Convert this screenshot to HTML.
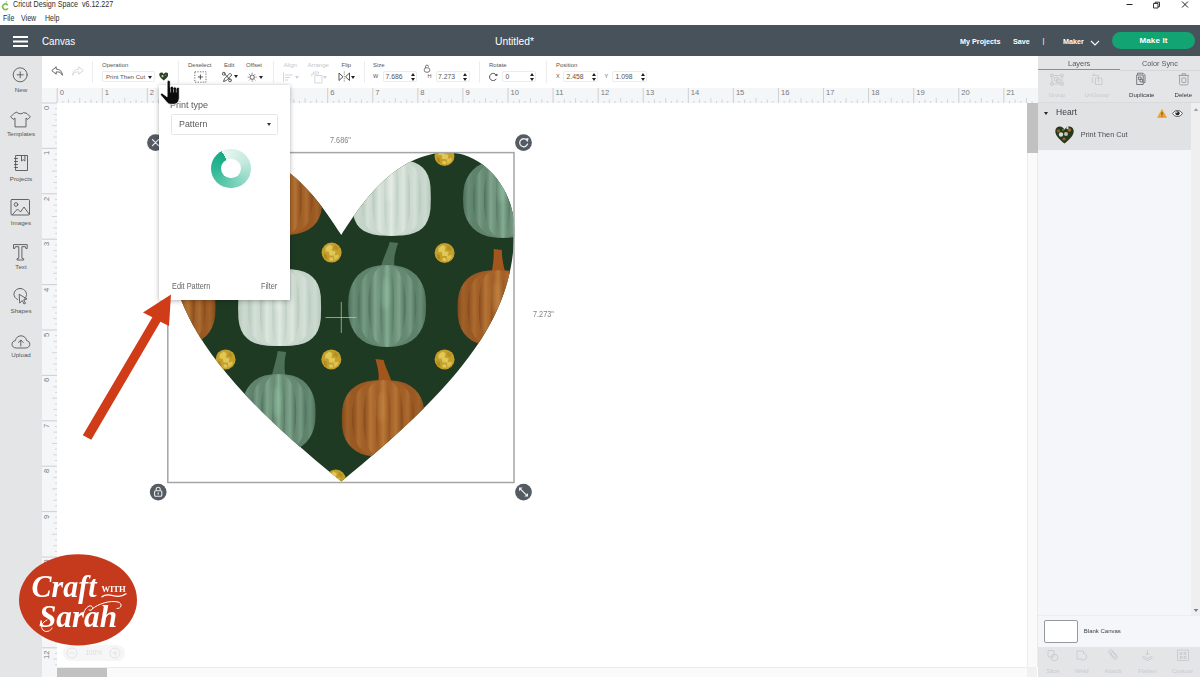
<!DOCTYPE html>
<html lang="en">
<head>
<meta charset="utf-8">
<title>Cricut Design Space</title>
<style>
*{box-sizing:border-box;margin:0;padding:0}
html,body{width:1200px;height:677px;overflow:hidden;background:#fff}
body{font-family:"Liberation Sans",sans-serif;color:#333;position:relative;font-size:8px}
.abs{position:absolute}
.t{position:absolute;white-space:nowrap;line-height:1;transform-origin:0 50%}
#titlebar{left:0;top:0;width:1200px;height:25px;background:#fff}
#header{left:0;top:25px;width:1200px;height:31px;background:#48525a}
#toolbar{left:42px;top:56px;width:996px;height:32px;background:#fff}
#leftbar{left:0;top:56px;width:42px;height:621px;background:#e4e5e7}
#rulerT{left:42px;top:88px;width:996px;height:15px;background:#f5f6f7}
#rulerL{left:42px;top:103px;width:15px;height:574px;background:#f5f6f7}
#canvas{left:57px;top:103px;width:970px;height:564px;background:#fff}
#vscroll{left:1027px;top:103px;width:11px;height:564px;background:#fafafa;border-left:1px solid #ececec;border-right:1px solid #ebebec}
#hscroll{left:57px;top:667px;width:970px;height:10px;background:#fafafa;border-top:1px solid #ededed}
#rightp{left:1038px;top:56px;width:162px;height:621px;background:#f4f6fa}

/* title */
#titlebar .t{color:#2e2e2e}
#header .t{color:#fff}
.lbl{position:absolute;white-space:nowrap;line-height:1;font-size:6px;color:#555;top:61.5px}
.dis{color:#c4c6c9}
.sep{position:absolute;top:61px;width:1px;height:22px;background:#ededef}
.inp{position:absolute;top:71px;height:11px;border:1px solid #ebecee;border-radius:2px;background:#fff}
.val{position:absolute;white-space:nowrap;line-height:1;font-size:6.8px;color:#555;top:73.7px}
.sm{position:absolute;white-space:nowrap;line-height:1;font-size:5.5px;color:#555;top:73.5px}
.car{position:absolute;width:0;height:0;border-left:2px solid transparent;border-right:2px solid transparent;border-top:3px solid #222}
.spin{position:absolute;width:4px;height:8px;top:72.5px}
.spin:before{content:"";position:absolute;left:0;top:0;border-left:2px solid transparent;border-right:2px solid transparent;border-bottom:3px solid #222}
.spin:after{content:"";position:absolute;left:0;top:5px;border-left:2px solid transparent;border-right:2px solid transparent;border-top:3px solid #222}

.sl{position:absolute;left:0;width:42px;text-align:center;font-size:6.2px;color:#555;line-height:1;white-space:nowrap}
.rn{position:absolute;top:89.300px;font-size:7.600px;color:#77797c;line-height:1}
.rv{position:absolute;left:43px;font-size:7.600px;color:#77797c;line-height:1;transform:rotate(-90deg);transform-origin:0 0;white-space:nowrap}

.rl{position:absolute;white-space:nowrap;line-height:1;font-size:6px;text-align:center;transform:translateX(-50%)}
</style>
</head>
<body>
<div id="titlebar" class="abs">
<svg class="abs" style="left:1.300px;top:0.800px" width="8" height="10" viewBox="0 0 16 20"><path d="M13 7.5A5.6 5.6 0 1 0 13 15.5" fill="none" stroke="#7dbb42" stroke-width="3.2" stroke-linecap="round"/><path d="M9 3.2C9.5 1.2 11 .4 12.6 .6 12.4 2.4 11 3.4 9 3.2Z" fill="#7dbb42"/></svg>
<div class="t" style="left:13px;top:1.200px;font-size:8.2px;transform:scaleX(.87)">Cricut Design Space &nbsp;v6.12.227</div>
<div class="t" style="left:2.5px;top:15.200px;font-size:8.2px;transform:scaleX(.86)">File</div>
<div class="t" style="left:21px;top:15.200px;font-size:8.2px;transform:scaleX(.86)">View</div>
<div class="t" style="left:44.5px;top:15.200px;font-size:8.2px;transform:scaleX(.86)">Help</div>
<svg class="abs" style="left:1120px;top:0" width="80" height="12" viewBox="0 0 80 12"><path d="M6.5 4.5h6" stroke="#222" stroke-width="1" fill="none"/><path d="M33.5 3.5h4.5v4.5h-4.5zM35 3.5v-1.3h4.5v4.5h-1.4" stroke="#222" stroke-width=".9" fill="none"/><path d="M62 1.5l6 6M68 1.5l-6 6" stroke="#222" stroke-width="1" fill="none"/></svg>
</div>
<div id="header" class="abs">
<div class="abs" style="left:13px;top:11px;width:15px;height:2px;background:#fff;box-shadow:0 4.5px 0 #fff,0 9px 0 #fff"></div>
<div class="t" style="left:42px;top:10.5px;font-size:10.5px;transform:scaleX(.93)">Canvas</div>
<div class="t" style="left:495px;top:10.5px;font-size:10.5px;transform:scaleX(.98)">Untitled*</div>
<div class="t" style="left:960px;top:12.800px;font-size:7.6px;font-weight:bold;transform:scaleX(.95)">My Projects</div>
<div class="t" style="left:1013px;top:12.800px;font-size:7.6px;font-weight:bold;transform:scaleX(.95)">Save</div>
<div class="t" style="left:1042.5px;top:12.300px;font-size:7.6px">|</div>
<div class="t" style="left:1063px;top:12.800px;font-size:7.6px;font-weight:bold;transform:scaleX(.95)">Maker</div>
<svg class="abs" style="left:1089px;top:13.800px" width="12" height="8" viewBox="0 0 12 8"><path d="M2 2l4 4 4-4" stroke="#fff" stroke-width="1.1" fill="none"/></svg>
<div class="abs" style="left:1112px;top:7px;width:83px;height:17px;border-radius:9px;background:#12a573"></div>
<div class="t" style="left:1112px;width:83px;text-align:center;top:12.300px;font-size:8px;font-weight:bold;letter-spacing:.15px">Make It</div>
</div>
<div id="toolbar" class="abs"></div>
<!-- toolbar contents (page coords) -->
<svg class="abs" style="left:50px;top:65px" width="36" height="14" viewBox="0 0 36 14"><path d="M6.2 1.8L1.8 5.6l4.4 3.6V6.9c2.8-.3 4.9.7 6.2 3.4C12.3 6.6 10 4.3 6.2 4.1z" fill="none" stroke="#555" stroke-width=".9" stroke-linejoin="round"/><path d="M28.8 1.8l4.4 3.8-4.4 3.6V6.9c-2.8-.3-4.9.7-6.2 3.4C22.700 6.6 25 4.3 28.8 4.1z" fill="none" stroke="#d0d2d4" stroke-width=".9" stroke-linejoin="round"/></svg>
<div class="sep" style="left:92px"></div>
<div class="lbl" style="left:102px">Operation</div>
<div class="inp" style="left:102px;width:53px"></div>
<div class="val" style="left:106px;font-size:6.1px;top:73.8px">Print Then Cut</div>
<div class="car" style="left:147.5px;top:75.5px"></div>
<svg class="abs" style="left:158.800px;top:71.700px" width="9.600" height="9.200" viewBox="0 0 11 10"><path d="M5.5 9.6C2.500 7 .3 4.800 .3 2.800.3 1.300 1.400.300 2.800.300c1.200 0 2.200.800 2.700 1.900C6 1.100 7 .3 8.200.300c1.400 0 2.500 1 2.500 2.500 0 2-2.200 4.200-5.200 6.800z" fill="#2c4423"/><circle cx="4" cy="4.500" r="1.200" fill="#c9cdb6"/><circle cx="7.500" cy="3.500" r=".9" fill="#8d7a35"/></svg>
<div class="sep" style="left:178px"></div>
<div class="lbl" style="left:188px">Deselect</div>
<svg class="abs" style="left:194px;top:70.5px" width="13" height="12" viewBox="0 0 13 12"><rect x=".8" y=".8" width="11.200" height="10.400" fill="none" stroke="#666" stroke-width=".9" stroke-dasharray="1.300 1.300"/><path d="M6.400 3.500v5M3.900 6h5" stroke="#444" stroke-width=".9"/></svg>
<div class="lbl" style="left:224px">Edit</div>
<svg class="abs" style="left:221px;top:71px" width="12" height="12" viewBox="0 0 12 12"><path d="M2.500 10.500l1-2.800 5.500-5.500 1.800 1.800-5.500 5.500z" fill="none" stroke="#444" stroke-width=".9" stroke-linejoin="round"/><path d="M2.300 1.500l7.500 8" stroke="#444" stroke-width=".9"/><circle cx="2.800" cy="2.800" r="1.500" fill="none" stroke="#444" stroke-width=".8"/><circle cx="9" cy="9.300" r="1.500" fill="none" stroke="#444" stroke-width=".8"/></svg>
<div class="car" style="left:234px;top:75px"></div>
<div class="lbl" style="left:246px">Offset</div>
<svg class="abs" style="left:247.200px;top:71.800px" width="10.400" height="10.400" viewBox="0 0 13 13"><circle cx="6.500" cy="6.500" r="2.700" fill="none" stroke="#444" stroke-width="1.100"/><path d="M6.500 .8v1.800M6.500 10.400v1.800M.8 6.500h1.800M10.400 6.500h1.800M2.500 2.500l1.300 1.300M9.200 9.200l1.300 1.300M10.500 2.500l-1.300 1.300M3.800 9.200l-1.300 1.300" stroke="#555" stroke-width=".8"/></svg>
<div class="car" style="left:259.300px;top:75.500px"></div>
<div class="sep" style="left:272.500px"></div>
<div class="lbl dis" style="left:283.500px">Align</div>
<svg class="abs" style="left:283px;top:72px" width="11" height="10" viewBox="0 0 11 10"><path d="M.5 .5v9M2 3h7.500M2 5.500h5M2 8h3" stroke="#d3d5d7" stroke-width="1"/></svg>
<div class="car" style="left:295px;top:75.500px;border-top-color:#d0d2d4"></div>
<div class="lbl dis" style="left:307.500px">Arrange</div>
<svg class="abs" style="left:310.500px;top:70.500px" width="12" height="13" viewBox="0 0 12 13"><path d="M2.500 3V1h5v2M.8 5.500V3h5.500v1.500M3.800 4.500h7.200v7.500H3.800z" fill="none" stroke="#d3d5d7" stroke-width=".9"/></svg>
<div class="car" style="left:322.500px;top:75.500px;border-top-color:#d0d2d4"></div>
<div class="lbl" style="left:341.500px">Flip</div>
<svg class="abs" style="left:337.500px;top:71px" width="13" height="12" viewBox="0 0 13 12"><path d="M1 2v7.500L5 5.800zM11.500 2v7.500L7.500 5.800z" fill="none" stroke="#444" stroke-width=".9" stroke-linejoin="round"/><path d="M6.250 .5v11" stroke="#555" stroke-width=".7" stroke-dasharray="1.200 1"/></svg>
<div class="car" style="left:350.500px;top:75.500px"></div>
<div class="sep" style="left:363.500px"></div>
<div class="lbl" style="left:373px">Size</div>
<div class="sm" style="left:373px">W</div>
<div class="inp" style="left:382.500px;width:34px"></div>
<div class="val" style="left:385.500px">7.686</div>
<div class="spin" style="left:410.500px"></div>
<svg class="abs" style="left:423px;top:64px" width="8" height="9" viewBox="0 0 8 9"><rect x="1.300" y="3.800" width="5.400" height="4.400" rx="1.800" fill="#fff" stroke="#555" stroke-width=".8"/><path d="M2.500 4V2.600a1.500 1.500 0 0 1 3 0" fill="none" stroke="#555" stroke-width=".8"/></svg>
<div class="sm" style="left:427.500px">H</div>
<div class="inp" style="left:435.500px;width:34px"></div>
<div class="val" style="left:438px">7.273</div>
<div class="spin" style="left:463px"></div>
<div class="sep" style="left:479px"></div>
<div class="lbl" style="left:489px">Rotate</div>
<svg class="abs" style="left:488px;top:72px" width="11" height="10" viewBox="0 0 11 10"><path d="M8.300 6.800A3.600 3.600 0 1 1 8.300 3.200" fill="none" stroke="#444" stroke-width=".9"/><path d="M6.800 3.600l2.800.400-.400-2.600z" fill="#444"/></svg>
<div class="inp" style="left:501.500px;width:34px"></div>
<div class="val" style="left:505.500px">0</div>
<div class="spin" style="left:529.500px"></div>
<div class="sep" style="left:545.500px"></div>
<div class="lbl" style="left:556px">Position</div>
<div class="sm" style="left:556px">X</div>
<div class="inp" style="left:562.500px;width:35px"></div>
<div class="val" style="left:566.500px">2.458</div>
<div class="spin" style="left:591.500px"></div>
<div class="sm" style="left:604.500px">Y</div>
<div class="inp" style="left:611.500px;width:35px"></div>
<div class="val" style="left:615.500px">1.098</div>
<div class="spin" style="left:640.500px"></div>
<!-- /toolbar -->
<div id="leftbar" class="abs"></div>
<svg class="abs" style="left:0;top:56px" width="42" height="310" viewBox="0 0 42 310" fill="none" stroke="#555" stroke-width=".9" stroke-linejoin="round" stroke-linecap="round">
<circle cx="20.200" cy="18.800" r="7"/><path d="M20.200 15.800v6M17.200 18.800h6"/>
<path d="M17 56.500c.8 1.700 5.700 1.700 6.500 0l3.500 1 3.300 3.300-2.500 2.600-1.800-1.300v8.800H15v-8.800l-1.800 1.300-2.500-2.600 3.300-3.300z"/>
<path d="M16 99.500h11.500v15H16zM14.500 102.500h3M14.500 105.500h3M14.500 108.500h3M14.500 111.500h3M21.500 99.500v5.500l1.700-1.300 1.700 1.300v-5.500"/>
<rect x="11" y="143.500" width="18.500" height="15.500" rx="1"/><circle cx="16" cy="148.500" r="1.800"/><path d="M12.500 158.500l5-5.500 3 3 3.500-5 5 7"/>
<path d="M13.500 189v3.500h1.300l.6-1.800h3.400v11.500l-1.800.6v1.200h6.700v-1.200l-1.800-.6v-11.500h3.400l.6 1.800h1.300V189z"/>
<path d="M20 232.500c3.500 0 6.500 2.500 6.500 6 0 1.500-.5 2.800-1.500 3.800M17.500 243.500c-2-1-3.500-3-3.500-5.200 0-3.300 2.700-5.800 6-5.800M19.500 238.500l7.500 4.500-3.300.8 1.800 3.500-1.500.7-1.700-3.500-2.300 2.300z"/>
<path d="M16 292c-2.300 0-4-1.600-4-3.700 0-2 1.500-3.500 3.400-3.700.5-2.900 2.800-4.800 5.600-4.800 2.900 0 5.200 2 5.600 4.800 1.900.3 3.200 1.800 3.200 3.700 0 2.100-1.700 3.700-3.900 3.700z"/><path d="M20.800 290v-5.500M18.300 286.500l2.500-2.500 2.500 2.500"/>
</svg>
<div class="sl" style="top:86.500px">New</div>
<div class="sl" style="top:131px">Templates</div>
<div class="sl" style="top:175.500px">Projects</div>
<div class="sl" style="top:219.500px">Images</div>
<div class="sl" style="top:264px">Text</div>
<div class="sl" style="top:308px">Shapes</div>
<div class="sl" style="top:352px">Upload</div>
<div id="rulerT" class="abs"></div>
<div id="rulerL" class="abs"></div>
<svg class="abs" style="left:0;top:0" width="1037" height="677" viewBox="0 0 1037 677" fill="none"><path stroke="#c9cbce" stroke-width=".9" d="M57.2 88v15M102.28 88v15M147.36 88v15M192.44 88v15M237.52 88v15M282.6 88v15M327.68 88v15M372.76 88v15M417.84 88v15M462.92 88v15M508 88v15M553.08 88v15M598.16 88v15M643.24 88v15M688.32 88v15M733.4 88v15M778.48 88v15M823.56 88v15M868.64 88v15M913.72 88v15M958.8 88v15M1003.88 88v15M42 103h15M42 148.4h15M42 193.8h15M42 239.2h15M42 284.6h15M42 330h15M42 375.4h15M42 420.8h15M42 466.2h15M42 511.6h15M42 557h15M42 602.4h15M42 647.8h15"/><path stroke="#c9cbce" stroke-width=".8" d="M79.74 98v5M124.82 98v5M169.9 98v5M214.98 98v5M260.06 98v5M305.14 98v5M350.22 98v5M395.3 98v5M440.38 98v5M485.46 98v5M530.54 98v5M575.62 98v5M620.7 98v5M665.78 98v5M710.86 98v5M755.94 98v5M801.02 98v5M846.1 98v5M891.18 98v5M936.26 98v5M981.34 98v5M1026.42 98v5M68.47 99.500v3.500M91.01 99.500v3.500M113.55 99.500v3.500M136.09 99.500v3.500M158.63 99.500v3.500M181.17 99.500v3.500M203.71 99.500v3.500M226.25 99.500v3.500M248.79 99.500v3.500M271.33 99.500v3.500M293.87 99.500v3.500M316.41 99.500v3.500M338.95 99.500v3.500M361.49 99.500v3.500M384.03 99.500v3.500M406.57 99.500v3.500M429.11 99.500v3.500M451.65 99.500v3.500M474.19 99.500v3.500M496.73 99.500v3.500M519.27 99.500v3.500M541.81 99.500v3.500M564.35 99.500v3.500M586.89 99.500v3.500M609.43 99.500v3.500M631.97 99.500v3.500M654.51 99.500v3.500M677.05 99.500v3.500M699.59 99.500v3.500M722.13 99.500v3.500M744.67 99.500v3.500M767.21 99.500v3.500M789.75 99.500v3.500M812.29 99.500v3.500M834.83 99.500v3.500M857.37 99.500v3.500M879.91 99.500v3.500M902.45 99.500v3.500M924.99 99.500v3.500M947.53 99.500v3.500M970.07 99.500v3.500M992.61 99.500v3.500M1015.15 99.500v3.500M62.84 101v2M74.11 101v2M85.38 101v2M96.65 101v2M107.91 101v2M119.19 101v2M130.45 101v2M141.72 101v2M153 101v2M164.26 101v2M175.53 101v2M186.81 101v2M198.07 101v2M209.34 101v2M220.62 101v2M231.88 101v2M243.15 101v2M254.43 101v2M265.69 101v2M276.96 101v2M288.24 101v2M299.5 101v2M310.77 101v2M322.04 101v2M333.31 101v2M344.58 101v2M355.85 101v2M367.12 101v2M378.39 101v2M389.66 101v2M400.94 101v2M412.2 101v2M423.47 101v2M434.74 101v2M446.01 101v2M457.28 101v2M468.55 101v2M479.82 101v2M491.09 101v2M502.36 101v2M513.63 101v2M524.9 101v2M536.17 101v2M547.45 101v2M558.72 101v2M569.99 101v2M581.25 101v2M592.52 101v2M603.8 101v2M615.07 101v2M626.34 101v2M637.61 101v2M648.88 101v2M660.14 101v2M671.42 101v2M682.69 101v2M693.96 101v2M705.23 101v2M716.5 101v2M727.76 101v2M739.03 101v2M750.31 101v2M761.58 101v2M772.85 101v2M784.12 101v2M795.38 101v2M806.65 101v2M817.93 101v2M829.2 101v2M840.47 101v2M851.74 101v2M863 101v2M874.27 101v2M885.54 101v2M896.82 101v2M908.09 101v2M919.36 101v2M930.62 101v2M941.89 101v2M953.16 101v2M964.44 101v2M975.71 101v2M986.98 101v2M998.25 101v2M1009.51 101v2M1020.78 101v2M1032.06 101v2M52 125.7h5M52 171.1h5M52 216.5h5M52 261.9h5M52 307.3h5M52 352.7h5M52 398.1h5M52 443.5h5M52 488.9h5M52 534.3h5M52 579.7h5M52 625.1h5M53.500 114.35h3.500M53.500 137.05h3.500M53.500 159.75h3.500M53.500 182.45h3.500M53.500 205.15h3.500M53.500 227.85h3.500M53.500 250.55h3.500M53.500 273.25h3.500M53.500 295.95h3.500M53.500 318.65h3.500M53.500 341.35h3.500M53.500 364.05h3.500M53.500 386.75h3.500M53.500 409.45h3.500M53.500 432.15h3.500M53.500 454.85h3.500M53.500 477.55h3.500M53.500 500.25h3.500M53.500 522.95h3.500M53.500 545.65h3.500M53.500 568.35h3.500M53.500 591.05h3.500M53.500 613.75h3.500M53.500 636.45h3.500M53.500 659.15h3.500M55 108.67h2M55 120.03h2M55 131.38h2M55 142.72h2M55 154.07h2M55 165.43h2M55 176.77h2M55 188.12h2M55 199.47h2M55 210.82h2M55 222.18h2M55 233.53h2M55 244.88h2M55 256.23h2M55 267.57h2M55 278.92h2M55 290.27h2M55 301.62h2M55 312.98h2M55 324.32h2M55 335.67h2M55 347.02h2M55 358.38h2M55 369.72h2M55 381.07h2M55 392.43h2M55 403.77h2M55 415.12h2M55 426.47h2M55 437.82h2M55 449.18h2M55 460.52h2M55 471.88h2M55 483.22h2M55 494.57h2M55 505.93h2M55 517.27h2M55 528.62h2M55 539.97h2M55 551.33h2M55 562.67h2M55 574.02h2M55 585.38h2M55 596.72h2M55 608.08h2M55 619.42h2M55 630.77h2M55 642.12h2M55 653.48h2M55 664.82h2"/></svg>
<div class="rn" style="left:59.7px">0</div><div class="rn" style="left:104.78px">1</div><div class="rn" style="left:149.86px">2</div><div class="rn" style="left:194.94px">3</div><div class="rn" style="left:240.02px">4</div><div class="rn" style="left:285.1px">5</div><div class="rn" style="left:330.18px">6</div><div class="rn" style="left:375.26px">7</div><div class="rn" style="left:420.34px">8</div><div class="rn" style="left:465.42px">9</div><div class="rn" style="left:510.5px">10</div><div class="rn" style="left:555.58px">11</div><div class="rn" style="left:600.66px">12</div><div class="rn" style="left:645.74px">13</div><div class="rn" style="left:690.82px">14</div><div class="rn" style="left:735.9px">15</div><div class="rn" style="left:780.98px">16</div><div class="rn" style="left:826.06px">17</div><div class="rn" style="left:871.14px">18</div><div class="rn" style="left:916.22px">19</div><div class="rn" style="left:961.3px">20</div><div class="rn" style="left:1006.38px">21</div><div class="rv" style="top:110px">0</div><div class="rv" style="top:155.4px">1</div><div class="rv" style="top:200.8px">2</div><div class="rv" style="top:246.2px">3</div><div class="rv" style="top:291.6px">4</div><div class="rv" style="top:337px">5</div><div class="rv" style="top:382.4px">6</div><div class="rv" style="top:427.8px">7</div><div class="rv" style="top:473.2px">8</div><div class="rv" style="top:518.6px">9</div><div class="rv" style="top:568px">10</div><div class="rv" style="top:613.4px">11</div><div class="rv" style="top:658.8px">12</div>
<div id="canvas" class="abs"></div>
<!--HEART--><svg class="abs" style="left:0;top:0" width="1037" height="677" viewBox="0 0 1037 677"><defs><linearGradient id="ro" x1="0" x2="1" y1="0" y2="0"><stop offset="0" stop-color="#8d4f1f"/><stop offset=".22" stop-color="#a9642b"/><stop offset=".5" stop-color="#ba7938"/><stop offset=".78" stop-color="#a9642b"/><stop offset="1" stop-color="#8d4f1f"/></linearGradient><linearGradient id="rw" x1="0" x2="1" y1="0" y2="0"><stop offset="0" stop-color="#bccdc1"/><stop offset=".22" stop-color="#d0ddd4"/><stop offset=".5" stop-color="#e0eae2"/><stop offset=".78" stop-color="#d0ddd4"/><stop offset="1" stop-color="#bccdc1"/></linearGradient><linearGradient id="rg" x1="0" x2="1" y1="0" y2="0"><stop offset="0" stop-color="#52745f"/><stop offset=".22" stop-color="#6e927b"/><stop offset=".5" stop-color="#84ad92"/><stop offset=".78" stop-color="#6e927b"/><stop offset="1" stop-color="#52745f"/></linearGradient><clipPath id="hc"><path d="M341.3 235C359.4 206.9 393.9 152.5 448 152.5C484.9 152.5 514.3 190.8 514.3 228C514.3 302.3 482.5 367.7 341.3 481.5C200.1 367.7 168.3 302.3 168.3 228C168.3 190.8 197.7 152.5 234.6 152.5C288.7 152.5 323.2 206.9 341.3 235Z"/></clipPath><filter id="bl" x="-5%" y="-5%" width="110%" height="110%"><feGaussianBlur stdDeviation=".5"/></filter><filter id="bl2" x="-30%" y="-30%" width="160%" height="160%"><feGaussianBlur stdDeviation="2.2"/></filter><linearGradient id="bo0"><stop offset="0%" stop-color="#864a1c"/><stop offset="6.9%" stop-color="#a1622a"/><stop offset="12.5%" stop-color="#9a5824"/><stop offset="87.5%" stop-color="#9a5824"/><stop offset="93.1%" stop-color="#a1622a"/><stop offset="100%" stop-color="#864a1c"/></linearGradient><linearGradient id="bo1"><stop offset="0%" stop-color="#864a1c"/><stop offset="10.1%" stop-color="#ac6c30"/><stop offset="18.3%" stop-color="#a15e27"/><stop offset="81.7%" stop-color="#a15e27"/><stop offset="89.9%" stop-color="#ac6c30"/><stop offset="100%" stop-color="#864a1c"/></linearGradient><linearGradient id="bo2"><stop offset="0%" stop-color="#864a1c"/><stop offset="17.4%" stop-color="#b57435"/><stop offset="31.6%" stop-color="#a6612a"/><stop offset="68.4%" stop-color="#a6612a"/><stop offset="82.6%" stop-color="#b57435"/><stop offset="100%" stop-color="#864a1c"/></linearGradient><linearGradient id="bo3"><stop offset="0%" stop-color="#905220"/><stop offset="50%" stop-color="#ba7938"/><stop offset="100%" stop-color="#905220"/></linearGradient><g id="pko"><path d="M40 0L39.6 9.1L38.5 15.5L36.5 21L33.9 25.7L30.5 29.7L26.4 33L21.5 35.6L15.9 37.5L9.3 38.6L0 39L-9.3 38.6L-15.9 37.5L-21.5 35.6L-26.4 33L-30.5 29.7L-33.9 25.7L-36.5 21L-38.5 15.5L-39.6 9.1L-40 0L-39.6 -9.1L-38.5 -15.5L-36.5 -21L-33.9 -25.7L-30.5 -29.7L-26.4 -33L-21.5 -35.6L-15.9 -37.5L-9.3 -38.6L-0 -39L9.3 -38.6L15.9 -37.5L21.5 -35.6L26.4 -33L30.5 -29.7L33.9 -25.7L36.5 -21L38.5 -15.5L39.6 -9.1Z" fill="url(#bo0)"/><path d="M30 0L29.7 9L28.8 15.4L27.4 20.8L25.4 25.5L22.9 29.5L19.8 32.8L16.1 35.4L11.9 37.2L7 38.3L0 38.7L-7 38.3L-11.9 37.2L-16.1 35.4L-19.8 32.8L-22.9 29.5L-25.4 25.5L-27.4 20.8L-28.8 15.4L-29.7 9L-30 0L-29.7 -9L-28.8 -15.4L-27.4 -20.8L-25.4 -25.5L-22.9 -29.5L-19.8 -32.8L-16.1 -35.4L-11.9 -37.2L-7 -38.3L-0 -38.7L7 -38.3L11.9 -37.2L16.1 -35.4L19.8 -32.8L22.9 -29.5L25.4 -25.5L27.4 -20.8L28.8 -15.4L29.7 -9Z" fill="url(#bo1)"/><path d="M19 0L18.8 9.1L18.3 15.5L17.4 20.9L16.1 25.6L14.5 29.6L12.5 32.9L10.2 35.5L7.6 37.4L4.4 38.5L0 38.9L-4.4 38.5L-7.6 37.4L-10.2 35.5L-12.5 32.9L-14.5 29.6L-16.1 25.6L-17.4 20.9L-18.3 15.5L-18.8 9.1L-19 0L-18.8 -9.1L-18.3 -15.5L-17.4 -20.9L-16.1 -25.6L-14.5 -29.6L-12.5 -32.9L-10.2 -35.5L-7.6 -37.4L-4.4 -38.5L-0 -38.9L4.4 -38.5L7.6 -37.4L10.2 -35.5L12.5 -32.9L14.5 -29.6L16.1 -25.6L17.4 -20.9L18.3 -15.5L18.8 -9.1Z" fill="url(#bo2)"/><path d="M7 0L6.9 9.1L6.7 15.5L6.4 21L5.9 25.7L5.3 29.7L4.6 33L3.8 35.6L2.8 37.5L1.6 38.6L0 39L-1.6 38.6L-2.8 37.5L-3.8 35.6L-4.6 33L-5.3 29.7L-5.9 25.7L-6.4 21L-6.7 15.5L-6.9 9.1L-7 0L-6.9 -9.1L-6.7 -15.5L-6.4 -21L-5.9 -25.7L-5.3 -29.7L-4.6 -33L-3.8 -35.6L-2.8 -37.5L-1.6 -38.6L-0 -39L1.6 -38.6L2.8 -37.5L3.8 -35.6L4.6 -33L5.3 -29.7L5.9 -25.7L6.4 -21L6.7 -15.5L6.9 -9.1Z" fill="url(#bo3)"/></g><linearGradient id="bw0"><stop offset="0%" stop-color="#b7c8bc"/><stop offset="6.9%" stop-color="#ccdad0"/><stop offset="12.5%" stop-color="#c5d4ca"/><stop offset="87.5%" stop-color="#c5d4ca"/><stop offset="93.1%" stop-color="#ccdad0"/><stop offset="100%" stop-color="#b7c8bc"/></linearGradient><linearGradient id="bw1"><stop offset="0%" stop-color="#b7c8bc"/><stop offset="10.1%" stop-color="#d5e1d8"/><stop offset="18.3%" stop-color="#cad8ce"/><stop offset="81.7%" stop-color="#cad8ce"/><stop offset="89.9%" stop-color="#d5e1d8"/><stop offset="100%" stop-color="#b7c8bc"/></linearGradient><linearGradient id="bw2"><stop offset="0%" stop-color="#b7c8bc"/><stop offset="17.4%" stop-color="#dce7de"/><stop offset="31.6%" stop-color="#cedbd2"/><stop offset="68.4%" stop-color="#cedbd2"/><stop offset="82.6%" stop-color="#dce7de"/><stop offset="100%" stop-color="#b7c8bc"/></linearGradient><linearGradient id="bw3"><stop offset="0%" stop-color="#becec3"/><stop offset="50%" stop-color="#e0eae2"/><stop offset="100%" stop-color="#becec3"/></linearGradient><g id="pkw"><path d="M40 0L39.7 11.3L38.7 17.8L37 23L34.7 27.4L31.7 31L28.1 33.9L23.6 36.1L18.3 37.7L11.6 38.7L0 39L-11.6 38.7L-18.3 37.7L-23.6 36.1L-28.1 33.9L-31.7 31L-34.7 27.4L-37 23L-38.7 17.8L-39.7 11.3L-40 0L-39.7 -11.3L-38.7 -17.8L-37 -23L-34.7 -27.4L-31.7 -31L-28.1 -33.9L-23.6 -36.1L-18.3 -37.7L-11.6 -38.7L-0 -39L11.6 -38.7L18.3 -37.7L23.6 -36.1L28.1 -33.9L31.7 -31L34.7 -27.4L37 -23L38.7 -17.8L39.7 -11.3Z" fill="url(#bw0)"/><path d="M30 0L29.8 11.2L29 17.7L27.8 22.9L26 27.2L23.8 30.7L21.1 33.6L17.7 35.8L13.7 37.4L8.7 38.4L0 38.7L-8.7 38.4L-13.7 37.4L-17.7 35.8L-21.1 33.6L-23.8 30.7L-26 27.2L-27.8 22.9L-29 17.7L-29.8 11.2L-30 0L-29.8 -11.2L-29 -17.7L-27.8 -22.9L-26 -27.2L-23.8 -30.7L-21.1 -33.6L-17.7 -35.8L-13.7 -37.4L-8.7 -38.4L-0 -38.7L8.7 -38.4L13.7 -37.4L17.7 -35.8L21.1 -33.6L23.8 -30.7L26 -27.2L27.8 -22.9L29 -17.7L29.8 -11.2Z" fill="url(#bw1)"/><path d="M19 0L18.8 11.3L18.4 17.8L17.6 23L16.5 27.3L15.1 30.9L13.3 33.8L11.2 36L8.7 37.6L5.5 38.6L0 38.9L-5.5 38.6L-8.7 37.6L-11.2 36L-13.3 33.8L-15.1 30.9L-16.5 27.3L-17.6 23L-18.4 17.8L-18.8 11.3L-19 0L-18.8 -11.3L-18.4 -17.8L-17.6 -23L-16.5 -27.3L-15.1 -30.9L-13.3 -33.8L-11.2 -36L-8.7 -37.6L-5.5 -38.6L-0 -38.9L5.5 -38.6L8.7 -37.6L11.2 -36L13.3 -33.8L15.1 -30.9L16.5 -27.3L17.6 -23L18.4 -17.8L18.8 -11.3Z" fill="url(#bw2)"/><path d="M7 0L6.9 11.3L6.8 17.8L6.5 23L6.1 27.4L5.6 31L4.9 33.9L4.1 36.1L3.2 37.7L2 38.7L0 39L-2 38.7L-3.2 37.7L-4.1 36.1L-4.9 33.9L-5.6 31L-6.1 27.4L-6.5 23L-6.8 17.8L-6.9 11.3L-7 0L-6.9 -11.3L-6.8 -17.8L-6.5 -23L-6.1 -27.4L-5.6 -31L-4.9 -33.9L-4.1 -36.1L-3.2 -37.7L-2 -38.7L-0 -39L2 -38.7L3.2 -37.7L4.1 -36.1L4.9 -33.9L5.6 -31L6.1 -27.4L6.5 -23L6.8 -17.8L6.9 -11.3Z" fill="url(#bw3)"/></g><linearGradient id="bg0"><stop offset="0%" stop-color="#4d6e5b"/><stop offset="6.9%" stop-color="#688e76"/><stop offset="12.5%" stop-color="#5f826c"/><stop offset="87.5%" stop-color="#5f826c"/><stop offset="93.1%" stop-color="#688e76"/><stop offset="100%" stop-color="#4d6e5b"/></linearGradient><linearGradient id="bg1"><stop offset="0%" stop-color="#4d6e5b"/><stop offset="10.1%" stop-color="#759c83"/><stop offset="18.3%" stop-color="#668973"/><stop offset="81.7%" stop-color="#668973"/><stop offset="89.9%" stop-color="#759c83"/><stop offset="100%" stop-color="#4d6e5b"/></linearGradient><linearGradient id="bg2"><stop offset="0%" stop-color="#4d6e5b"/><stop offset="17.4%" stop-color="#7ea68c"/><stop offset="31.6%" stop-color="#6b8e78"/><stop offset="68.4%" stop-color="#6b8e78"/><stop offset="82.6%" stop-color="#7ea68c"/><stop offset="100%" stop-color="#4d6e5b"/></linearGradient><linearGradient id="bg3"><stop offset="0%" stop-color="#577965"/><stop offset="50%" stop-color="#84ad92"/><stop offset="100%" stop-color="#577965"/></linearGradient><g id="pkg"><path d="M40 0L39.6 8.3L38.4 14.7L36.3 20.2L33.5 25L30 29.2L25.7 32.7L20.7 35.4L15 37.4L8.5 38.6L0 39L-8.5 38.6L-15 37.4L-20.7 35.4L-25.7 32.7L-30 29.2L-33.5 25L-36.3 20.2L-38.4 14.7L-39.6 8.3L-40 0L-39.6 -8.3L-38.4 -14.7L-36.3 -20.2L-33.5 -25L-30 -29.2L-25.7 -32.7L-20.7 -35.4L-15 -37.4L-8.5 -38.6L-0 -39L8.5 -38.6L15 -37.4L20.7 -35.4L25.7 -32.7L30 -29.2L33.5 -25L36.3 -20.2L38.4 -14.7L39.6 -8.3Z" fill="url(#bg0)"/><path d="M30 0L29.7 8.2L28.8 14.5L27.2 20L25.1 24.9L22.5 29L19.3 32.4L15.5 35.2L11.3 37.1L6.4 38.3L0 38.7L-6.4 38.3L-11.3 37.1L-15.5 35.2L-19.3 32.4L-22.5 29L-25.1 24.9L-27.2 20L-28.8 14.5L-29.7 8.2L-30 0L-29.7 -8.2L-28.8 -14.5L-27.2 -20L-25.1 -24.9L-22.5 -29L-19.3 -32.4L-15.5 -35.2L-11.3 -37.1L-6.4 -38.3L-0 -38.7L6.4 -38.3L11.3 -37.1L15.5 -35.2L19.3 -32.4L22.5 -29L25.1 -24.9L27.2 -20L28.8 -14.5L29.7 -8.2Z" fill="url(#bg1)"/><path d="M19 0L18.8 8.3L18.2 14.6L17.3 20.1L15.9 25L14.2 29.1L12.2 32.6L9.8 35.3L7.1 37.3L4 38.5L0 38.9L-4 38.5L-7.1 37.3L-9.8 35.3L-12.2 32.6L-14.2 29.1L-15.9 25L-17.3 20.1L-18.2 14.6L-18.8 8.3L-19 0L-18.8 -8.3L-18.2 -14.6L-17.3 -20.1L-15.9 -25L-14.2 -29.1L-12.2 -32.6L-9.8 -35.3L-7.1 -37.3L-4 -38.5L-0 -38.9L4 -38.5L7.1 -37.3L9.8 -35.3L12.2 -32.6L14.2 -29.1L15.9 -25L17.3 -20.1L18.2 -14.6L18.8 -8.3Z" fill="url(#bg2)"/><path d="M7 0L6.9 8.3L6.7 14.7L6.4 20.2L5.9 25L5.2 29.2L4.5 32.7L3.6 35.4L2.6 37.4L1.5 38.6L0 39L-1.5 38.6L-2.6 37.4L-3.6 35.4L-4.5 32.7L-5.2 29.2L-5.9 25L-6.4 20.2L-6.7 14.7L-6.9 8.3L-7 0L-6.9 -8.3L-6.7 -14.7L-6.4 -20.2L-5.9 -25L-5.2 -29.2L-4.5 -32.7L-3.6 -35.4L-2.6 -37.4L-1.5 -38.6L-0 -39L1.5 -38.6L2.6 -37.4L3.6 -35.4L4.5 -32.7L5.2 -29.2L5.9 -25L6.4 -20.2L6.7 -14.7L6.9 -8.3Z" fill="url(#bg3)"/></g></defs><g clip-path="url(#hc)"><rect x="160" y="145" width="360" height="345" fill="#1f3a22"/><g filter="url(#bl)"><g transform="translate(283 198)"><path d="M-6 -32C-4 -42 -0.6 -50.8 1 -60L7.5 -59C5 -48.5 4 -41 6 -32Z" fill="#a2561d"/><use href="#pko" transform="scale(0.988 0.949)"/><ellipse cx="-2" cy="-11.1" rx="4.5" ry="14.8" fill="#cf9350" opacity=".28" filter="url(#bl2)"/></g><g transform="translate(391.3 197.7)"><path d="M-6 -33C-4 -43 -0.6 -51.8 1 -61L7.5 -60C5 -49.5 4 -42 6 -33Z" fill="#8fa894"/><use href="#pkw" transform="scale(0.988 0.974)"/><ellipse cx="-2" cy="-11.4" rx="4.5" ry="15.2" fill="#f2f6f2" opacity=".28" filter="url(#bl2)"/></g><g transform="translate(503 199)"><path d="M-6 -34C-4 -44 -0.6 -52.8 1 -62L7.5 -61C5 -50.5 4 -43 6 -34Z" fill="#4e6f59"/><use href="#pkg" transform="scale(1.000 1.000)"/><ellipse cx="-2" cy="-11.7" rx="4.5" ry="15.6" fill="#a2d4b2" opacity=".28" filter="url(#bl2)"/></g><g transform="translate(172 199)"><path d="M-6 -34C-4 -44 -0.6 -52.8 1 -62L7.5 -61C5 -50.5 4 -43 6 -34Z" fill="#4e6f59"/><use href="#pkg" transform="scale(1.000 1.000)"/><ellipse cx="-2" cy="-11.7" rx="4.5" ry="15.6" fill="#a2d4b2" opacity=".28" filter="url(#bl2)"/></g><g transform="translate(176 307)"><path d="M-6 -33C-4 -43 -0.6 -51.8 1 -61L7.5 -60C5 -49.5 4 -42 6 -33Z" fill="#a2561d"/><use href="#pko" transform="scale(0.988 0.974)"/><ellipse cx="-2" cy="-11.4" rx="4.5" ry="15.2" fill="#cf9350" opacity=".28" filter="url(#bl2)"/></g><g transform="translate(279.6 307.5)"><path d="M-6 -33.5C-4 -43.5 -0.6 -52.3 1 -61.5L7.5 -60.5C5 -50 4 -42.5 6 -33.5Z" fill="#8fa894"/><use href="#pkw" transform="scale(1.038 0.987)"/><ellipse cx="-2" cy="-11.5" rx="4.5" ry="15.4" fill="#f2f6f2" opacity=".28" filter="url(#bl2)"/></g><g transform="translate(387.1 306)"><path d="M-7 -36C-5 -46 0.2 -54.8 2.6 -64L11.1 -63C7.4 -52.5 6 -45 8 -36Z" fill="#4e6f59"/><use href="#pkg" transform="scale(0.975 1.051)"/><ellipse cx="-2" cy="-12.3" rx="4.5" ry="16.4" fill="#a2d4b2" opacity=".28" filter="url(#bl2)"/></g><g transform="translate(498 308)"><path d="M-6.8 -33C-4.8 -43 -3.9 -50.6 -4.3 -59L3.9 -58C3.8 -48.5 5.8 -42 7.8 -33Z" fill="#a2561d"/><use href="#pko" transform="scale(1.012 0.974)"/><ellipse cx="-2" cy="-11.4" rx="4.5" ry="15.2" fill="#cf9350" opacity=".28" filter="url(#bl2)"/></g><g transform="translate(278.6 413)"><path d="M-7.5 -34C-5.5 -44 -2.1 -52.8 -0.9 -62L7.5 -61C5.4 -50.5 5.5 -43 7.5 -34Z" fill="#4e6f59"/><use href="#pkg" transform="scale(0.925 1.000)"/><ellipse cx="-2" cy="-11.7" rx="4.5" ry="15.6" fill="#a2d4b2" opacity=".28" filter="url(#bl2)"/></g><g transform="translate(383.2 418.5)"><path d="M-5.3 -33.5C-3.3 -43.5 -5.4 -51.1 -7.8 -59.5L0.4 -58.5C2.8 -49 7.3 -42.5 9.3 -33.5Z" fill="#a2561d"/><use href="#pko" transform="scale(1.035 0.987)"/><ellipse cx="-2" cy="-11.5" rx="4.5" ry="15.4" fill="#cf9350" opacity=".28" filter="url(#bl2)"/></g><g transform="translate(492 418)"><path d="M-6 -33C-4 -43 -0.6 -51.8 1 -61L7.5 -60C5 -49.5 4 -42 6 -33Z" fill="#8fa894"/><use href="#pkw" transform="scale(1.000 0.974)"/><ellipse cx="-2" cy="-11.4" rx="4.5" ry="15.2" fill="#f2f6f2" opacity=".28" filter="url(#bl2)"/></g><g transform="translate(225.8 156)"><circle r="10" fill="#c4a02c"/><path d="M-6 -5l4-3 3 2 -1 4 4 1 -1 4 -5 0 -1-4 -3 0z" fill="#e8d468" opacity=".75"/><path d="M2 3l5-1 0 3 -4 3z" fill="#e8cf5e" opacity=".7"/><path d="M-8 1l3 1 1 5 -3-1z" fill="#a27a15" opacity=".55"/><path d="M3 -8l4 3 -1 3 -4-2z" fill="#a8801a" opacity=".5"/><path d="M-2 5l3 0 1 3 -4 0z" fill="#f3e384" opacity=".6"/></g><g transform="translate(444.5 156)"><circle r="10" fill="#c4a02c"/><path d="M-6 -5l4-3 3 2 -1 4 4 1 -1 4 -5 0 -1-4 -3 0z" fill="#e8d468" opacity=".75"/><path d="M2 3l5-1 0 3 -4 3z" fill="#e8cf5e" opacity=".7"/><path d="M-8 1l3 1 1 5 -3-1z" fill="#a27a15" opacity=".55"/><path d="M3 -8l4 3 -1 3 -4-2z" fill="#a8801a" opacity=".5"/><path d="M-2 5l3 0 1 3 -4 0z" fill="#f3e384" opacity=".6"/></g><g transform="translate(331.6 252.6)"><circle r="10" fill="#c4a02c"/><path d="M-6 -5l4-3 3 2 -1 4 4 1 -1 4 -5 0 -1-4 -3 0z" fill="#e8d468" opacity=".75"/><path d="M2 3l5-1 0 3 -4 3z" fill="#e8cf5e" opacity=".7"/><path d="M-8 1l3 1 1 5 -3-1z" fill="#a27a15" opacity=".55"/><path d="M3 -8l4 3 -1 3 -4-2z" fill="#a8801a" opacity=".5"/><path d="M-2 5l3 0 1 3 -4 0z" fill="#f3e384" opacity=".6"/></g><g transform="translate(444.6 253)"><circle r="10" fill="#c4a02c"/><path d="M-6 -5l4-3 3 2 -1 4 4 1 -1 4 -5 0 -1-4 -3 0z" fill="#e8d468" opacity=".75"/><path d="M2 3l5-1 0 3 -4 3z" fill="#e8cf5e" opacity=".7"/><path d="M-8 1l3 1 1 5 -3-1z" fill="#a27a15" opacity=".55"/><path d="M3 -8l4 3 -1 3 -4-2z" fill="#a8801a" opacity=".5"/><path d="M-2 5l3 0 1 3 -4 0z" fill="#f3e384" opacity=".6"/></g><g transform="translate(225.6 359.4)"><circle r="10" fill="#c4a02c"/><path d="M-6 -5l4-3 3 2 -1 4 4 1 -1 4 -5 0 -1-4 -3 0z" fill="#e8d468" opacity=".75"/><path d="M2 3l5-1 0 3 -4 3z" fill="#e8cf5e" opacity=".7"/><path d="M-8 1l3 1 1 5 -3-1z" fill="#a27a15" opacity=".55"/><path d="M3 -8l4 3 -1 3 -4-2z" fill="#a8801a" opacity=".5"/><path d="M-2 5l3 0 1 3 -4 0z" fill="#f3e384" opacity=".6"/></g><g transform="translate(331.3 359.4)"><circle r="10" fill="#c4a02c"/><path d="M-6 -5l4-3 3 2 -1 4 4 1 -1 4 -5 0 -1-4 -3 0z" fill="#e8d468" opacity=".75"/><path d="M2 3l5-1 0 3 -4 3z" fill="#e8cf5e" opacity=".7"/><path d="M-8 1l3 1 1 5 -3-1z" fill="#a27a15" opacity=".55"/><path d="M3 -8l4 3 -1 3 -4-2z" fill="#a8801a" opacity=".5"/><path d="M-2 5l3 0 1 3 -4 0z" fill="#f3e384" opacity=".6"/></g><g transform="translate(444.6 359.4)"><circle r="10" fill="#c4a02c"/><path d="M-6 -5l4-3 3 2 -1 4 4 1 -1 4 -5 0 -1-4 -3 0z" fill="#e8d468" opacity=".75"/><path d="M2 3l5-1 0 3 -4 3z" fill="#e8cf5e" opacity=".7"/><path d="M-8 1l3 1 1 5 -3-1z" fill="#a27a15" opacity=".55"/><path d="M3 -8l4 3 -1 3 -4-2z" fill="#a8801a" opacity=".5"/><path d="M-2 5l3 0 1 3 -4 0z" fill="#f3e384" opacity=".6"/></g><g transform="translate(335.8 479.5)"><circle r="10" fill="#c4a02c"/><path d="M-6 -5l4-3 3 2 -1 4 4 1 -1 4 -5 0 -1-4 -3 0z" fill="#e8d468" opacity=".75"/><path d="M2 3l5-1 0 3 -4 3z" fill="#e8cf5e" opacity=".7"/><path d="M-8 1l3 1 1 5 -3-1z" fill="#a27a15" opacity=".55"/><path d="M3 -8l4 3 -1 3 -4-2z" fill="#a8801a" opacity=".5"/><path d="M-2 5l3 0 1 3 -4 0z" fill="#f3e384" opacity=".6"/></g></g></g><path d="M341.3 302v31M325.500 317.500h31" stroke="#b9c9bd" stroke-width=".9" opacity=".8" fill="none"/><rect x="167.800" y="152.600" width="346.200" height="329.900" fill="none" stroke="#a3a5a7" stroke-width="1.500"/></svg><!--/HEART-->
<!--OVER-->
<svg class="abs" style="left:0;top:0" width="1037" height="677" viewBox="0 0 1037 677">
<!-- handles -->
<g fill="#545b63">
<circle cx="155.500" cy="142.600" r="8.400"/><circle cx="523.500" cy="142.600" r="8.400"/><circle cx="158.200" cy="492.100" r="8.400"/><circle cx="523.500" cy="492.100" r="8.400"/>
</g>
<g fill="none" stroke="#e9ecef" stroke-width="1.300" stroke-linecap="round">
<path d="M152.500 139.600l6 6M158.500 139.600l-6 6"/>
<path d="M527.300 141a4 4 0 1 0 .2 3"/>
<path d="M520 488.600l7 7"/>
</g>
<path d="M525.200 138.400l3.300-.5-.5 3.600z" fill="#e9ecef"/>
<path d="M519 487.600h3.600l-3.600 3.600zM528 496.600h-3.600l3.600-3.600z" fill="#e9ecef"/>
<rect x="154.600" y="490.700" width="7.200" height="5.600" rx="1" fill="none" stroke="#e9ecef" stroke-width="1.100"/><path d="M156.200 490.600v-1.300a2 2 0 0 1 4 0v1.300" fill="none" stroke="#e9ecef" stroke-width="1.100"/><rect x="157.600" y="492.500" width="1.200" height="2" fill="#e9ecef"/>
</svg>
<div class="t" style="left:330.300px;top:136.500px;font-size:8.200px;color:#808284;transform:scaleX(.89)">7.686"</div>
<div class="t" style="left:533px;top:311.300px;font-size:8.200px;color:#808284;transform:scaleX(.89)">7.273"</div>
<!-- popup -->
<div class="abs" style="left:158.500px;top:85px;width:131px;height:214.600px;background:#fff;box-shadow:0 1px 5px rgba(0,0,0,.28),0 0 1px rgba(0,0,0,.15)"></div>
<div class="t" style="left:170px;top:100.700px;font-size:9px;color:#5a5a5a;transform:scaleX(1)">Print type</div>
<div class="abs" style="left:171.300px;top:114.200px;width:106.400px;height:20.700px;border:1px solid #e6e6e6;border-radius:1.500px;background:#fff"></div>
<div class="t" style="left:179.300px;top:120.200px;font-size:9px;color:#5a5a5a;transform:scaleX(.98)">Pattern</div>
<div class="car" style="left:267.300px;top:122.500px;border-top-color:#333"></div>
<div class="abs" style="left:211px;top:148.500px;width:39.800px;height:39.800px;border-radius:50%;background:conic-gradient(from -28deg,#e9f6f2 0deg,#c6eadf 90deg,#7ad2ba 190deg,#33b997 290deg,#12aa84 360deg)"></div>
<div class="abs" style="left:221.250px;top:158.750px;width:19.300px;height:19.300px;border-radius:50%;background:#fff"></div>
<div class="t" style="left:171.800px;top:282px;font-size:8.400px;color:#666;transform:scaleX(.875)">Edit Pattern</div>
<div class="t" style="left:261.200px;top:282px;font-size:8.400px;color:#666;transform:scaleX(.875)">Filter</div>
<!-- arrow -->
<svg class="abs" style="left:60px;top:280px" width="130" height="170" viewBox="60 280 130 170"><path d="M171 294.500L143 312.500L152.400 317.300L82.800 435.300L91.300 439.800L160.400 321.800L169 326Z" fill="#d03c17"/></svg>
<!-- cursor -->
<svg class="abs" style="left:155px;top:75px" width="30" height="34" viewBox="155 75 30 34"><path d="M167.100 81.900a1.600 1.600 0 0 1 3.200 0V87.300L170.800 87.300a1.200 1.200 0 0 1 2.400 0L173.800 87.800a1.100 1.100 0 0 1 2.200 0L176.600 88.500a1.350 1.350 0 0 1 2.700 0V97.500C179.300 101.500 177 104.300 173.500 104.300H171C169 104.300 167.500 103.300 166.300 101.700L160.800 95.300C160 94 161.200 92.600 162.500 93.400L167.100 96.800Z" fill="#0b0b0b" stroke="#fff" stroke-width=".8" stroke-linejoin="round"/><path d="M170.550 88.200v4.300M173.500 88.600v3.900M176.300 89.200v3.300" stroke="#fff" stroke-width=".55"/></svg>
<!-- zoom control -->
<div class="abs" style="left:62.500px;top:645px;width:62.500px;height:16px;border-radius:8px;background:#f6f6f7"></div>
<svg class="abs" style="left:62px;top:645px" width="64" height="16" viewBox="0 0 64 16" fill="none" stroke="#e0e1e4" stroke-width=".9"><circle cx="10" cy="8" r="5"/><path d="M7.500 8h5"/><circle cx="53" cy="8" r="5"/><path d="M50.500 8h5M53 5.500v5"/></svg>
<div class="t" style="left:85.500px;top:650px;font-size:6.500px;color:#dcdde0">100%</div>
<!-- logo -->
<svg class="abs" style="left:15px;top:550px" width="128" height="100" viewBox="15 550 128 100">
<ellipse cx="78" cy="599.900" rx="59" ry="45.700" fill="#c53a1d"/>
<g font-family="'Liberation Serif',serif" fill="#fff">
<text x="31.500" y="597.300" font-style="italic" font-weight="bold" font-size="32" textLength="65" lengthAdjust="spacingAndGlyphs">Craft</text>
<text x="101.400" y="591.700" font-weight="bold" font-size="8.300" textLength="24.400" lengthAdjust="spacingAndGlyphs">WITH</text>
<text x="39" y="626.800" font-style="italic" font-weight="bold" font-size="32" textLength="78" lengthAdjust="spacingAndGlyphs">Sarah</text>
</g>
<g fill="none" stroke="#fff" stroke-linecap="round">
<path d="M102 596.800c3-2.500 7-2.200 11-1.200s9 1.200 13-1.800" stroke-width="1.300"/>
<path d="M84 612c2-5 6-7.500 8-5.500s-1 5-3 3.500M92 609c6-5 18-9 26-7 5 1.500 3.500 7-1 6.500" stroke-width="1"/>
<path d="M47 620c-5 2-7 7-4 10s8 1 9-2" stroke-width="1"/>
</g>
</svg>
<!--/OVER-->
<div id="vscroll" class="abs"><div class="abs" style="left:-1px;top:0;width:10.500px;height:49.600px;background:#c1c1c1"></div></div>
<div id="hscroll" class="abs"><div class="abs" style="left:0;top:0;width:50px;height:9px;background:#c1c1c1"></div></div>
<div class="abs" style="left:1027px;top:667px;width:10px;height:10px;background:#f1f1f1"></div>
<div id="rightp" class="abs">
<div class="abs" style="left:0;top:0;width:163px;height:46.500px;background:#e4e5e7"></div>
<div class="abs" style="left:0;top:46px;width:163px;height:1px;background:#d9dadc"></div>
<div class="t" style="left:29.700px;top:3.600px;font-size:8px;color:#55595e;transform:scaleX(.93)">Layers</div>
<div class="t" style="left:104.300px;top:3.600px;font-size:8px;color:#55595e;transform:scaleX(.915)">Color Sync</div>
<div class="abs" style="left:0;top:12.800px;width:82px;height:1.700px;background:#8b8e92"></div>
<div class="abs" style="left:82px;top:13.500px;width:81px;height:1px;background:#d6d7d9"></div>
<svg class="abs" style="left:0;top:14px" width="163" height="20" viewBox="0 0 163 20" fill="none" stroke-width=".9" stroke-linejoin="round">
<g stroke="#c6c8cb"><rect x="14" y="5.500" width="10" height="8.500"/><rect x="12.700" y="4.200" width="2.400" height="2.400" fill="#e4e5e7"/><rect x="22.800" y="4.200" width="2.400" height="2.400" fill="#e4e5e7"/><rect x="12.700" y="12.800" width="2.400" height="2.400" fill="#e4e5e7"/><rect x="22.800" y="12.800" width="2.400" height="2.400" fill="#e4e5e7"/><rect x="16.500" y="7.500" width="3.500" height="3.500"/><rect x="18.500" y="9" width="3.500" height="3.500"/>
<path d="M56 3v2.500M54.300 5.500h6.200v6.700M57.500 8h6.500v6.500h-6.500zM54.300 7.500v4.700h1.500"/></g>
<g stroke="#6a6e73"><path d="M99.500 5v-1.800h5.500l2 2v7.300h-1.800M99.500 5h5.700v9.500h-6.500V5z"/><rect x="100.500" y="7" width="2.600" height="2.600"/><rect x="102" y="9.300" width="2.600" height="2.600"/></g>
<g stroke="#9a9da1"><path d="M141.500 5.500h8.500v8.200a1.200 1.200 0 0 1-1.200 1.200h-6.100a1.200 1.200 0 0 1-1.200-1.200zM140.500 5.300h10.500M144 5.200V3.700h3.500v1.500"/><rect x="143.800" y="8" width="4" height="4.500" rx=".5"/></g>
</svg>
<div class="rl" style="left:19px;top:35.500px;color:#c6c8cb">Group</div>
<div class="rl" style="left:58.700px;top:35.500px;color:#c6c8cb">UnGroup</div>
<div class="rl" style="left:103.800px;top:35.500px;color:#33373c;font-size:6.100px">Duplicate</div>
<div class="rl" style="left:145.300px;top:35.500px;color:#33373c;font-size:6.100px">Delete</div>
<!-- layer list -->
<div class="abs" style="left:0;top:47px;width:153px;height:46.500px;background:#e1e2e4"></div>
<div class="abs" style="left:153px;top:47px;width:10px;height:512px;background:#efeff0"></div>
<div class="car" style="left:6.200px;top:56px;border-top-color:#222"></div>
<div class="t" style="left:17.500px;top:52px;font-size:9px;color:#3c4045;transform:scaleX(.95)">Heart</div>
<svg class="abs" style="left:119px;top:52.500px" width="10" height="9" viewBox="0 0 10 9"><path d="M5 .6L9.500 8.400H.5z" fill="#f2a32c" stroke="#e08e14" stroke-width=".5" stroke-linejoin="round"/><path d="M5 3.200v2.800M5 6.800v.9" stroke="#5a3a08" stroke-width=".9"/></svg>
<svg class="abs" style="left:134px;top:54px" width="11" height="7" viewBox="0 0 11 7"><path d="M.6 3.500C2 1.300 3.600.500 5.500.500s3.500.8 4.900 3c-1.400 2.200-3 3-4.900 3S2 5.700.6 3.500z" fill="#fff" stroke="#333" stroke-width=".8"/><circle cx="5.500" cy="3.300" r="2.100" fill="#222"/><circle cx="4.800" cy="2.600" r=".7" fill="#fff"/></svg>
<svg class="abs" style="left:17px;top:69.500px" width="19" height="18" viewBox="0 0 19 18"><defs><clipPath id="hc2"><path id="hp2" d="M9.500 17.600C4 13 .3 9 .3 5.200.3 2.400 2.300.400 4.900.400c2 0 3.700 1.300 4.600 3.300C10.400 1.700 12.100.400 14.100.400c2.600 0 4.600 2 4.600 4.800 0 3.800-3.700 7.800-9.200 12.400z"/></clipPath></defs><g clip-path="url(#hc2)"><rect width="19" height="18" fill="#24381f"/><circle cx="6" cy="8.500" r="2.200" fill="#d9ddd0"/><circle cx="11" cy="8" r="2" fill="#b8c4b0"/><circle cx="3.500" cy="5" r="1.800" fill="#8b5a24"/><circle cx="14.500" cy="4" r="1.700" fill="#a86a2a"/><circle cx="9" cy="13" r="1.600" fill="#9a5f25"/><circle cx="12.500" cy="2" r="1.200" fill="#d8dccf"/><circle cx="8" cy="4" r=".8" fill="#c7a53c"/></g></svg>
<div class="t" style="left:42.700px;top:75.300px;font-size:7.300px;color:#4a4e53">Print Then Cut</div>
<svg class="abs" style="left:155px;top:51px" width="6" height="5" viewBox="0 0 6 5"><path d="M3 1l2.300 3H.7z" fill="#a0a2a5"/></svg>
<svg class="abs" style="left:155px;top:551.500px" width="6" height="5" viewBox="0 0 6 5"><path d="M3 4L5.300 1H.7z" fill="#7a7d81"/></svg>
<!-- blank canvas -->
<div class="abs" style="left:0;top:559px;width:163px;height:1px;background:#eceded"></div>
<div class="abs" style="left:6px;top:563.500px;width:33.500px;height:23px;border:1px solid #96989b;border-radius:2px;background:#fff"></div>
<div class="t" style="left:45.800px;top:572px;font-size:6px;color:#3c4045">Blank Canvas</div>
<!-- bottom actions -->
<div class="abs" style="left:0;top:590.500px;width:163px;height:31px;background:#e4e5e7"></div>
<svg class="abs" style="left:0;top:592px" width="163" height="16" viewBox="0 0 163 16" fill="none" stroke="#c8cacd" stroke-width=".9" stroke-linejoin="round">
<rect x="10" y="2.500" width="6" height="6.500" rx="1"/><circle cx="16.500" cy="9.500" r="3.300"/>
<path d="M39 3h6.500v2.500a3.300 3.300 0 1 1-2.500 5.500H39z"/>
<rect x="73" y="1" width="4.200" height="11" rx="2.100" transform="rotate(-40 75 6.500)"/><rect x="73.900" y="3.500" width="2.300" height="6.500" rx="1.100" transform="rotate(-40 75 6.500)"/>
<path d="M109.500 2v5M107.500 5l2 2 2-2M104.500 8l5 2.500 5-2.500M104.500 10l5 2.500 5-2.500"/>
<rect x="139.500" y="2" width="11" height="10.500"/><rect x="142" y="4.500" width="2" height="2"/><rect x="146" y="4.500" width="2" height="2"/><rect x="142" y="8.500" width="2" height="2"/><rect x="146" y="8.500" width="2" height="2"/>
</svg>
<div class="rl" style="left:15px;top:612px;color:#c8cacd">Slice</div>
<div class="rl" style="left:43.800px;top:612px;color:#c8cacd">Weld</div>
<div class="rl" style="left:75px;top:612px;color:#c8cacd">Attach</div>
<div class="rl" style="left:109.300px;top:612px;color:#c8cacd">Flatten</div>
<div class="rl" style="left:144.600px;top:612px;color:#c8cacd">Contour</div>
</div>
</body>
</html>
